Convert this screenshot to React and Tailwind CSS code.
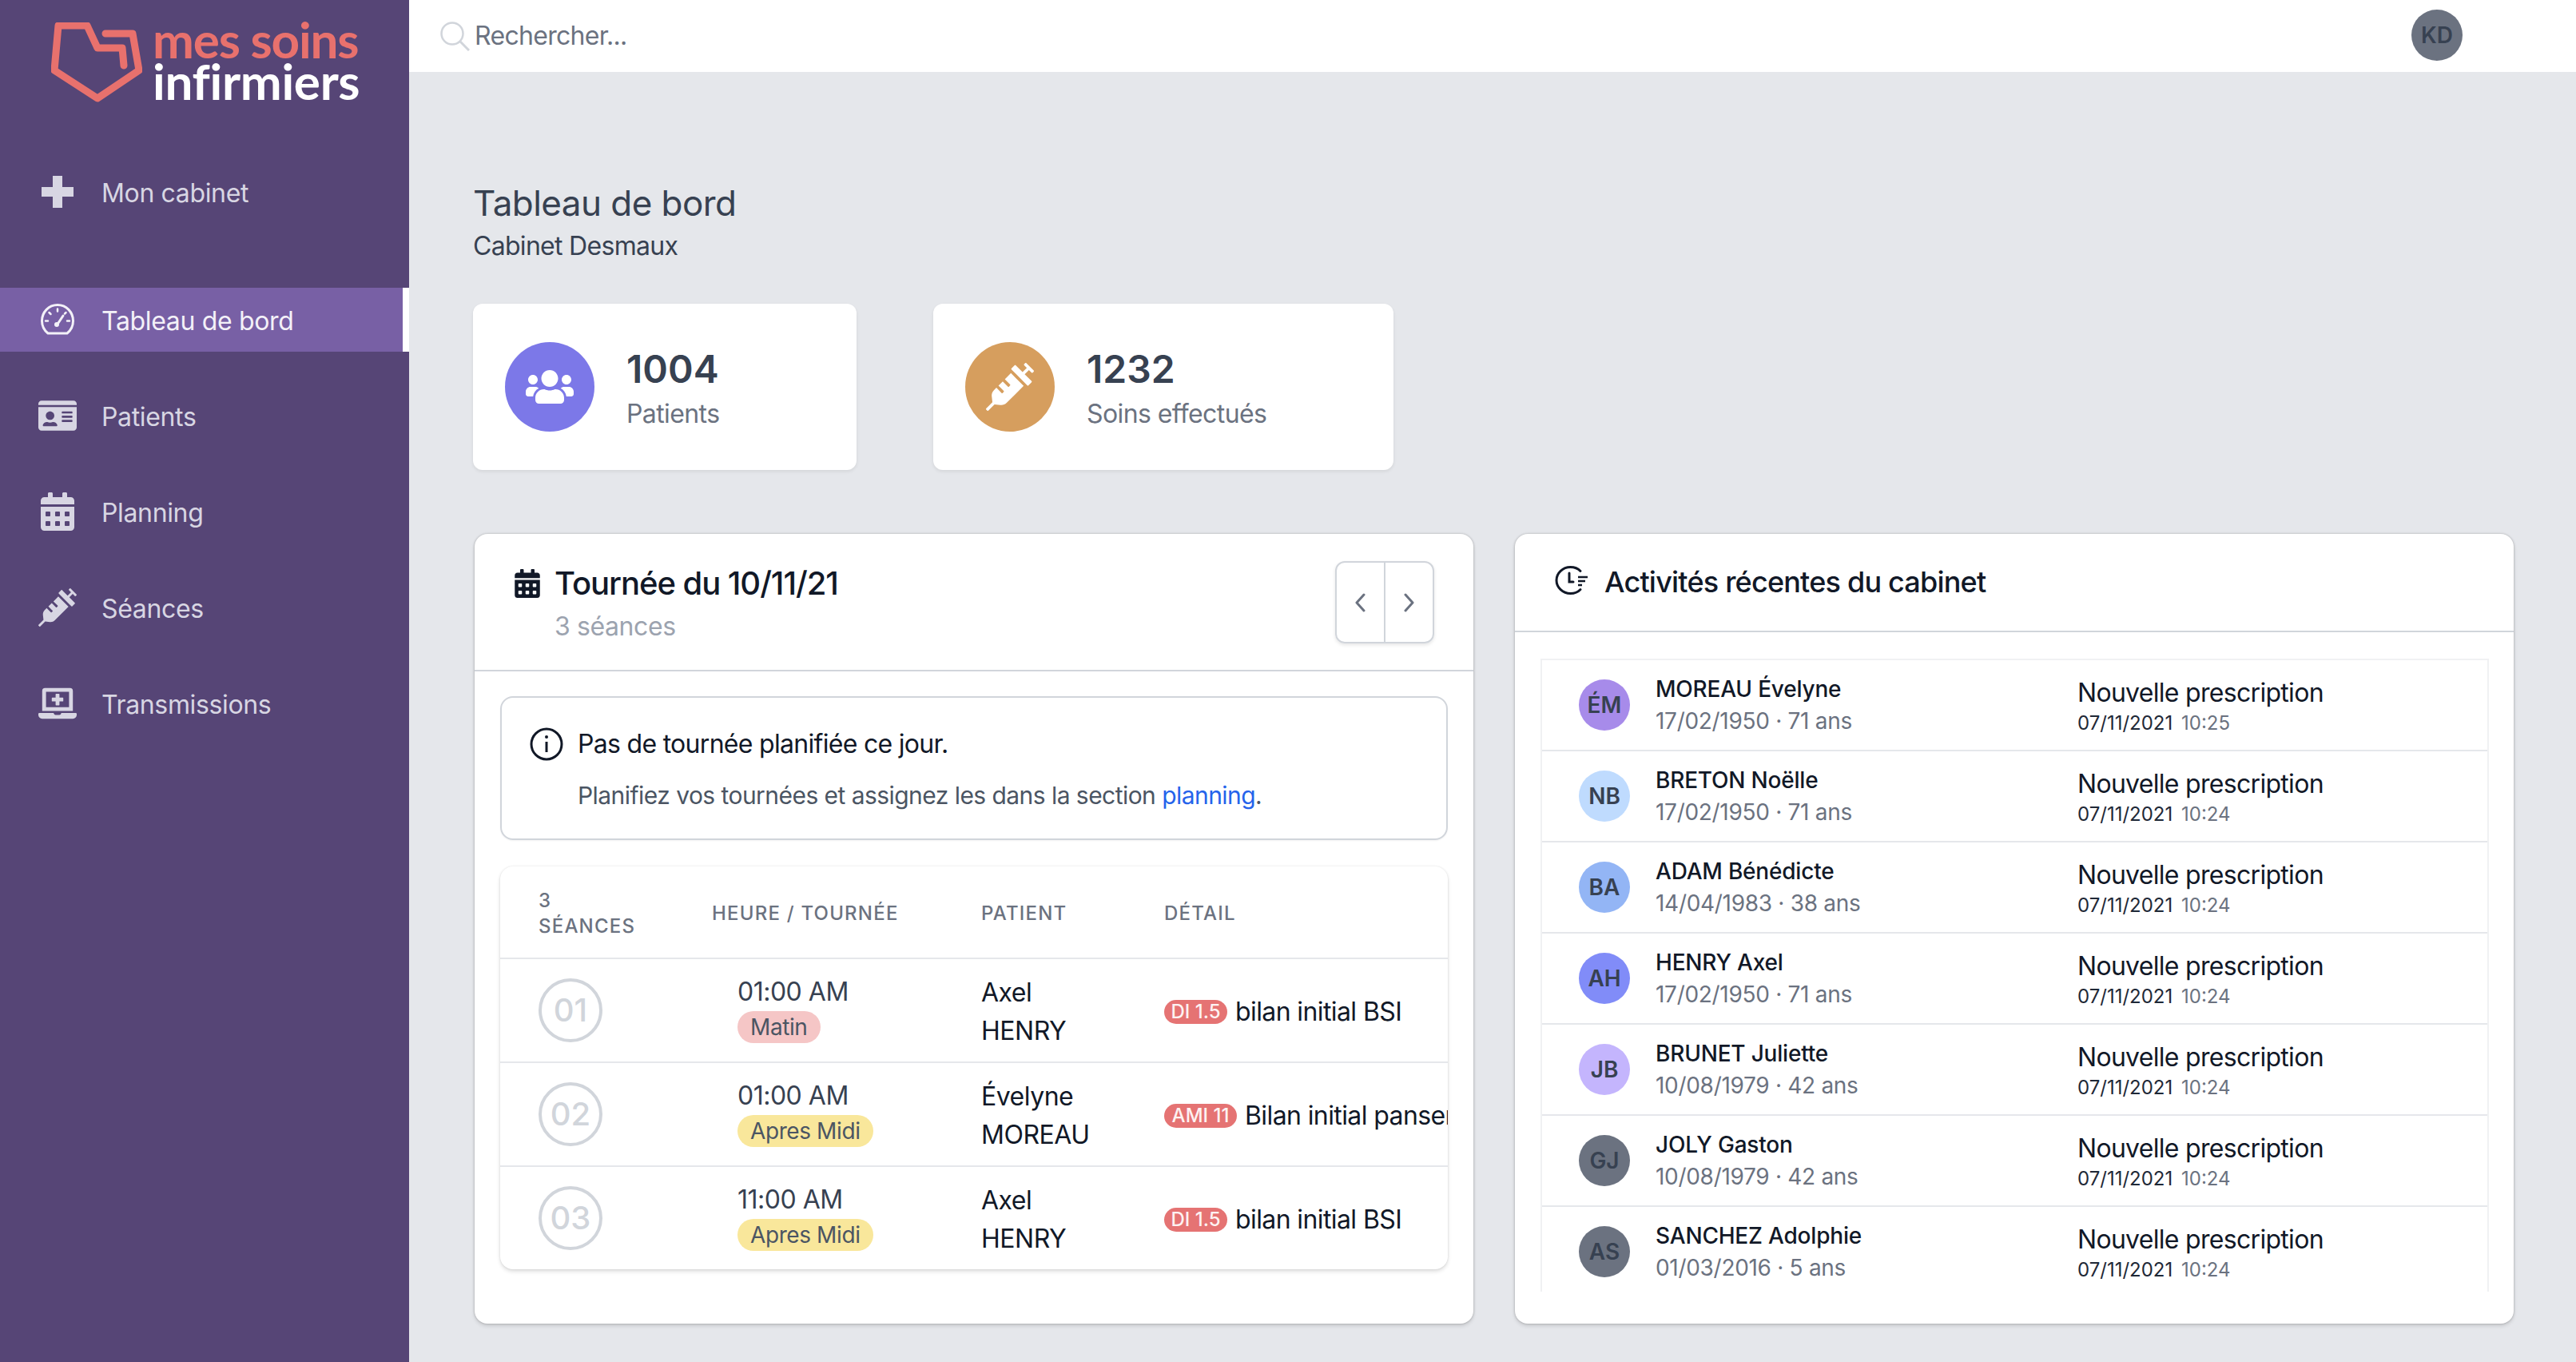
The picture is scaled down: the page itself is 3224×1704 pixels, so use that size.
import React from "react";
import { FaIdCard, FaCalendarAlt, FaSyringe, FaLaptopMedical, FaUsers } from "react-icons/fa";

const Gauge = ({ className }) => (
  <svg viewBox="0 0 42 40" className={className} fill="none" stroke="currentColor" strokeWidth="3" strokeLinecap="round" strokeLinejoin="round">
    <path d="M9 37 C4 33 1.500 27.500 1.500 21.500 C1.500 10.500 10 1.500 21 1.500 C32 1.500 40.500 10.500 40.500 21.500 C40.500 27.500 38 33 33 37 Z" />
    <path d="M21 6.500v3M10.500 11l2 2M6 21.500h3M33 21.500h3M31.500 11l-1.500 1.500" strokeWidth="2.500" />
    <path d="M21 25.500 L28 15" strokeWidth="3" />
    <circle cx="20" cy="26" r="3" fill="currentColor" stroke="none" />
  </svg>
);

const Plus = ({ className }) => (
  <svg viewBox="0 0 40 40" className={className} fill="currentColor">
    <path d="M14 0h12v14h14v12H26v14H14V26H0V14h14z" />
  </svg>
);

const Search = ({ className }) => (
  <svg viewBox="0 0 37 37" className={className} fill="none" stroke="currentColor">
    <circle cx="15" cy="15" r="13.500" strokeWidth="2.500" />
    <path d="M24.500 24.500L36 36" strokeWidth="3" />
  </svg>
);

const Info = ({ className }) => (
  <svg viewBox="0 0 42 42" className={className} fill="none" stroke="currentColor">
    <circle cx="21" cy="21" r="19" strokeWidth="3" />
    <path d="M21 18v13" strokeWidth="3" />
    <circle cx="21" cy="12" r="2" fill="currentColor" stroke="none" />
  </svg>
);

const Chevron = ({ d }) => (
  <svg viewBox="0 0 16 24" className="h-[24px] w-[16px] text-[#6b7280]" fill="none" stroke="currentColor" strokeWidth="3" strokeLinecap="round" strokeLinejoin="round">
    <path d={d} />
  </svg>
);

const ClockLines = ({ className }) => (
  <svg viewBox="0 0 44 36" className={className} fill="none" stroke="currentColor" strokeWidth="3" strokeLinecap="round">
    <path d="M32 6.500 C29 3.300 24.500 1.500 19.500 1.500 C10 1.500 2 9 2 18 C2 27 10 34.500 19.500 34.500 C24.500 34.500 29 32.700 32 29.500" />
    <path d="M18 9v11h5" />
    <path d="M29 14h12M29 19h9M29 24h5" strokeLinecap="butt" strokeWidth="2.500" />
  </svg>
);

const Logo = () => (
  <div className="flex h-[200px] items-start pl-[64px] pt-[28px]">
    <svg viewBox="0 0 114 100" className="h-[100px] w-[114px] text-[#e8716d]" fill="none" stroke="currentColor" strokeWidth="9" strokeLinejoin="round" strokeLinecap="round">
      <path d="M68 14 H102 L110 60 L58 95 L4 60 L9 4 H45 L58 32 H89 L91 54" />
    </svg>
    <div className="ml-[13px] -mt-[5px] font-['Lato',sans-serif] text-[62px] font-bold leading-[52px] tracking-[-0.3px]">
      <div className="tracking-[-1.2px] text-[#e8716d]">mes soins</div>
      <div className="text-white">infirmiers</div>
    </div>
  </div>
);

const NavItem = ({ icon: Icon, label, iconClass, active, className = "" }) => (
  <div className={`flex h-[80px] items-center pl-[48px] ${active ? "border-r-[8px] border-white bg-[#7860a5] text-[#f3f1f8]" : "text-[#d8d6e3]"} ${className}`}>
    <span className="flex w-[48px] items-center justify-center">
      <Icon className={iconClass} />
    </span>
    <span className="ml-[31px] translate-y-[2px] text-[32px] tracking-[-0.35px]">{label}</span>
  </div>
);

const Sidebar = () => (
  <aside className="h-full w-[512px] shrink-0 bg-[#564576]">
    <Logo />
    <NavItem icon={Plus} label="Mon cabinet" iconClass="h-[40px] w-[40px]" className="mb-[80px]" />
    <NavItem icon={Gauge} label="Tableau de bord" iconClass="h-[40px] w-[42px]" active className="mb-[40px]" />
    <div className="flex flex-col gap-[40px]">
      <NavItem icon={FaIdCard} label="Patients" iconClass="h-[48px] w-[48px]" />
      <NavItem icon={FaCalendarAlt} label="Planning" iconClass="h-[48px] w-[42px]" />
      <NavItem icon={FaSyringe} label="Séances" iconClass="h-[48px] w-[48px]" />
      <NavItem icon={FaLaptopMedical} label="Transmissions" iconClass="h-[40px] w-[48px]" />
    </div>
  </aside>
);

const Stat = ({ icon: Icon, color, value, label, width }) => (
  <div className={`flex h-[208px] items-center rounded-[12px] bg-white px-[40px] shadow-[0_2px_4px_rgba(0,0,0,0.08)] ${width}`}>
    <div className={`flex h-[112px] w-[112px] items-center justify-center rounded-full text-white ${color}`}>
      <Icon className="h-[60px] w-[60px]" />
    </div>
    <div className="ml-[40px]">
      <div className="translate-y-[4px] text-[48px] font-semibold leading-[60px] text-[#374151]">{value}</div>
      <div className="mt-[4px] translate-y-[2px] text-[32px] leading-[48px] tracking-[-0.6px] text-[#6b7280]">{label}</div>
    </div>
  </div>
);

const Seance = ({ n, time, slot, slotClass, first, last, code, codeWidth, detail }) => (
  <div className="grid h-[130px] shrink-0 grid-cols-[217px_337px_229px_1fr] items-center border-t-2 border-[#e5e7eb] pl-[48px]">
    <div className="flex h-[80px] w-[80px] items-center justify-center rounded-full border-[4px] border-[#d1d5db] text-[40px] font-medium text-[#d1d5db]">{n}</div>
    <div className="-translate-y-[3px] pl-[32px]">
      <div className="text-[32px] leading-[48px] tracking-[-0.5px] text-[#374151]">{time}</div>
      <span className={`block w-fit rounded-full px-[16px] text-[28px] leading-[40px] tracking-[-0.4px] ${slotClass}`}>{slot}</span>
    </div>
    <div className="translate-y-[2px] text-[32px] leading-[48px] tracking-[-0.5px] text-[#111827]">
      <div>{first}</div>
      <div>{last}</div>
    </div>
    <div className="flex translate-y-[2px] items-center whitespace-nowrap">
      <span className={`rounded-full bg-[#e57373] text-center text-[24px] font-medium leading-[30px] text-[#fdf2f2] ${codeWidth}`}>{code}</span>
      <span className="ml-[10px] text-[32px] leading-[48px] tracking-[-0.6px] text-[#111827]">{detail}</span>
    </div>
  </div>
);

const Activity = ({ initials, color, name, birth, date, time }) => (
  <div className="flex h-[114px] shrink-0 items-center border-b-2 border-[#e5e7eb] pl-[46px]">
    <div className={`flex h-[64px] w-[64px] shrink-0 items-center justify-center rounded-full text-[28px] font-semibold text-[#374151] ${color}`}>{initials}</div>
    <div className="ml-[32px] w-[528px]">
      <div className="text-[28px] font-medium leading-[40px] tracking-[-0.2px] text-[#111827]">{name}</div>
      <div className="text-[28px] leading-[40px] tracking-[-0.3px] text-[#6b7280]">{birth}</div>
    </div>
    <div className="translate-y-[3px]">
      <div className="text-[32px] leading-[40px] tracking-[-0.7px] text-[#111827]">Nouvelle prescription</div>
      <div className="text-[24px] leading-[36px] text-[#1f2937]">
        {date} <span className="ml-[4px] text-[#6b7280]">{time}</span>
      </div>
    </div>
  </div>
);

const cardShadow = "shadow-[0_0_3px_rgba(0,0,0,0.25),0_3px_5px_rgba(0,0,0,0.12)]";

const activities = [
  ["ÉM", "bg-[#a78bea]", "MOREAU Évelyne", "17/02/1950 · 71 ans", "10:25"],
  ["NB", "bg-[#bfdbfe]", "BRETON Noëlle", "17/02/1950 · 71 ans", "10:24"],
  ["BA", "bg-[#93b5f5]", "ADAM Bénédicte", "14/04/1983 · 38 ans", "10:24"],
  ["AH", "bg-[#818cf8]", "HENRY Axel", "17/02/1950 · 71 ans", "10:24"],
  ["JB", "bg-[#c4b5fd]", "BRUNET Juliette", "10/08/1979 · 42 ans", "10:24"],
  ["GJ", "bg-[#6b7280]", "JOLY Gaston", "10/08/1979 · 42 ans", "10:24"],
  ["AS", "bg-[#6b7280]", "SANCHEZ Adolphie", "01/03/2016 · 5 ans", "10:24"],
];

export default function App() {
  return (
    <div className="flex h-screen w-full overflow-hidden bg-[#e5e7eb] font-['Inter',sans-serif]">
      <Sidebar />
      <main className="flex min-w-0 flex-1 flex-col">
        <header className="flex h-[90px] shrink-0 items-center bg-white pl-[39px] pr-[142px]">
          <Search className="h-[37px] w-[37px] text-[#d1d5db]" />
          <span className="ml-[6px] text-[32px] tracking-[-0.7px] text-[#6b7280]">Rechercher...</span>
          <div className="ml-auto flex h-[64px] w-[64px] -translate-y-[1px] items-center justify-center rounded-full bg-[#6b7280] text-[28px] font-semibold text-[#374151]">KD</div>
        </header>
        <div className="pl-[80px] pr-[78px] pt-[132px]">
          <h1 className="text-[44px] leading-[64px] tracking-[-0.55px] text-[#374151]">Tableau de bord</h1>
          <p className="text-[32px] leading-[44px] tracking-[-0.7px] text-[#374151]">Cabinet Desmaux</p>
          <div className="mt-[50px] flex gap-[96px]">
            <Stat icon={FaUsers} color="bg-[#7c78e8]" value="1004" label="Patients" width="w-[480px]" />
            <Stat icon={FaSyringe} color="bg-[#d69e5e]" value="1232" label="Soins effectués" width="w-[576px]" />
          </div>
          <div className="ml-[2px] mt-[80px] grid h-[988px] grid-cols-[1250px_1250px] gap-[52px]">
            <section className={`flex flex-col overflow-hidden rounded-[16px] bg-white ${cardShadow}`}>
              <div className="flex h-[172px] shrink-0 items-start justify-between border-b-2 border-[#d1d5db] pl-[50px] pr-[49px] pt-[34px]">
                <div>
                  <div className="flex items-center">
                    <FaCalendarAlt className="h-[36px] w-[32px] text-[#111827]" />
                    <span className="ml-[18px] text-[40px] font-medium leading-[56px] tracking-[-1.05px] text-[#111827]">Tournée du 10/11/21</span>
                  </div>
                  <div className="ml-[50px] mt-[2px] text-[32px] leading-[48px] tracking-[-0.4px] text-[#9ca3af]">3 séances</div>
                </div>
                <div className="flex h-[103px] w-[124px] rounded-[12px] border-2 border-[#d1d5db] shadow-[0_2px_4px_rgba(0,0,0,0.1)]">
                  <div className="flex flex-1 items-center justify-center border-r-2 border-[#d1d5db]"><Chevron d="M12 2L3 12l9 10" /></div>
                  <div className="flex flex-1 items-center justify-center"><Chevron d="M3 2l9 10-9 10" /></div>
                </div>
              </div>
              <div className="flex flex-1 flex-col px-[32px] pt-[31px]">
                <div className="flex h-[180px] shrink-0 flex-col rounded-[16px] border-2 border-[#d1d5db] px-[35px] pt-[34px] shadow-[0_1px_2px_rgba(0,0,0,0.05)]">
                  <div className="flex items-center">
                    <Info className="h-[42px] w-[42px] text-[#111827]" />
                    <span className="ml-[18px] text-[32px] leading-[48px] tracking-[-0.7px] text-[#111827]">Pas de tournée planifiée ce jour.</span>
                  </div>
                  <div className="ml-[60px] mt-[16px] text-[30px] leading-[48px] tracking-[-0.55px] text-[#4b5563]">
                    Planifiez vos tournées et assignez les dans la section <span className="text-[#2563eb]">planning</span>.
                  </div>
                </div>
                <div className="mt-[33px] flex h-[504px] shrink-0 flex-col overflow-hidden rounded-[16px] bg-white shadow-[0_0_3px_rgba(0,0,0,0.1),0_3px_5px_rgba(0,0,0,0.12)]">
                  <div className="grid h-[114px] shrink-0 translate-y-[2px] grid-cols-[217px_337px_229px_1fr] items-center pl-[48px] text-[24px] font-medium uppercase leading-[32px] tracking-[1.2px] text-[#6b7280]">
                    <div>3<br />Séances</div>
                    <div>Heure / Tournée</div>
                    <div>Patient</div>
                    <div>Détail</div>
                  </div>
                  <Seance n="01" time="01:00 AM" slot="Matin" slotClass="bg-[#f5c6c6] text-[#4b5563]" first="Axel" last="HENRY" code="DI 1.5" codeWidth="w-[79px]" detail="bilan initial BSI" />
                  <Seance n="02" time="01:00 AM" slot="Apres Midi" slotClass="bg-[#f9e79b] text-[#4b5563]" first="Évelyne" last="MOREAU" code="AMI 11" codeWidth="w-[91px]" detail="Bilan initial pansement" />
                  <Seance n="03" time="11:00 AM" slot="Apres Midi" slotClass="bg-[#f9e79b] text-[#4b5563]" first="Axel" last="HENRY" code="DI 1.5" codeWidth="w-[79px]" detail="bilan initial BSI" />
                </div>
              </div>
            </section>
            <section className={`flex flex-col overflow-hidden rounded-[16px] bg-white ${cardShadow}`}>
              <div className="flex h-[123px] shrink-0 items-start border-b-2 border-[#d1d5db] pl-[50px] pt-[36px]">
                <ClockLines className="mt-[4px] h-[36px] w-[44px] text-[#111827]" />
                <span className="ml-[18px] text-[36px] font-medium leading-[48px] tracking-[-0.8px] text-[#111827]">Activités récentes du cabinet</span>
              </div>
              <div className="ml-[32px] mr-[31px] mt-[33px] flex h-[792px] flex-col overflow-hidden border-x-2 border-t-2 border-[#f0f1f3]">
                {activities.map(([i, c, n, b, t]) => (
                  <Activity key={i} initials={i} color={c} name={n} birth={b} date="07/11/2021" time={t} />
                ))}
              </div>
            </section>
          </div>
        </div>
      </main>
    </div>
  );
}
